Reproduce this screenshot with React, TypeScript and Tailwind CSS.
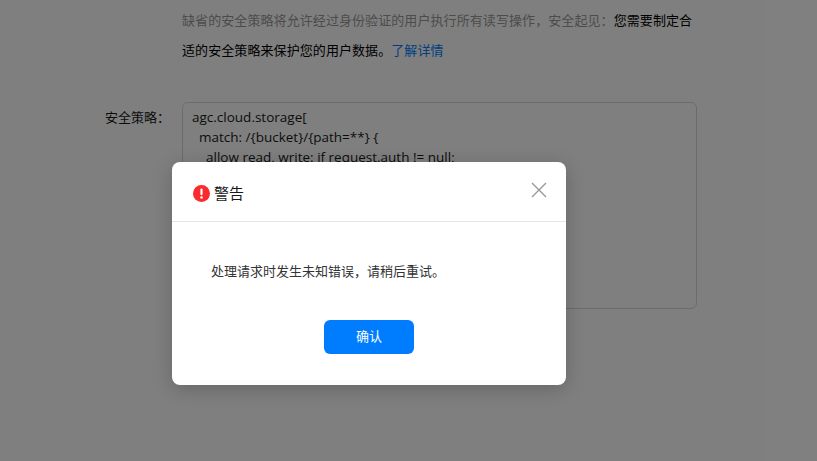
const code = `agc.cloud.storage[
  match: /{bucket}/{path=**} {
    allow read, write: if request.auth != null;
  }
]`

function AlertIcon() {
  return (
    <svg width="17" height="17" viewBox="0 0 17 17" className="mt-1 shrink-0">
      <circle cx="8.5" cy="8.5" r="8.5" fill="#fa2a2d" />
      <rect x="7.4" y="3.4" width="2.2" height="6.8" rx="1" fill="#fff" />
      <circle cx="8.5" cy="12.6" r="1.25" fill="#fff" />
    </svg>
  )
}

export default function App() {
  return (
    <div className="relative h-[461px] w-[817px] overflow-hidden bg-white font-['Open_Sans','Noto_Sans_CJK_SC',sans-serif] text-[13px] text-[#191919]">
      <div className="pl-[182px] pt-[5px]">
        <p className="w-[515px] leading-[30px] tracking-[0.08px] text-[#999]">
          缺省的安全策略将允许经过身份验证的用户执行所有读写操作，安全起见：
          <span className="text-black">您需要制定合适的安全策略来保护您的用户数据。</span>
          <a className="text-[#007dff]">了解详情</a>
        </p>
      </div>
      <div className="mt-[37px] flex">
        <label className="w-[182px] pr-[12px] pt-[5px] text-right leading-5">安全策略：</label>
        <pre className="h-[207px] w-[515px] rounded-md border border-[#d9d9de] px-[9px] py-1 font-['Open_Sans','Noto_Sans_CJK_SC',sans-serif] text-[13.5px] leading-5">
          {code}
        </pre>
      </div>

      <div className="absolute inset-0 flex items-start justify-center bg-black/50">
        <div className="ml-[-79px] mt-[162px] w-[394px] rounded-lg bg-white shadow-[0_4px_20px_rgba(0,0,0,0.2)]">
          <div className="flex h-[60px] items-center border-b border-[#e5e5e5] pl-[21px] pr-[19px]">
            <AlertIcon />
            <span className="ml-1 mt-[3px] text-[15px]">警告</span>
            <svg width="16" height="16" viewBox="0 0 16 16" className="ml-auto mb-[3px] text-[#999]">
              <path d="M1 1 15 15M15 1 1 15" stroke="currentColor" strokeWidth="1.4" fill="none" />
            </svg>
          </div>
          <div className="pl-[39px] pt-[39px] leading-5 text-[#333]">处理请求时发生未知错误，请稍后重试。</div>
          <div className="flex justify-center pb-[31px] pt-[39px]">
            <button className="h-[34px] w-[90px] rounded-md bg-[#007dff] text-white">确认</button>
          </div>
        </div>
      </div>
    </div>
  )
}
